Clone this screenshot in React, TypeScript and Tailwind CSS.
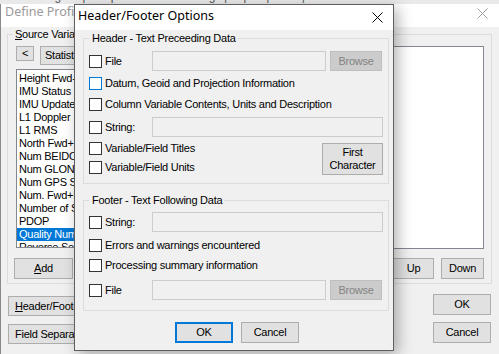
import React from "react";

function Box({ blue }: { blue?: boolean }) {
  return (
    <span
      className={
        blue
          ? "block h-[13px] w-[13px] shrink-0 border border-[#0078d7] bg-white"
          : "block h-[13px] w-[13px] shrink-0 border border-[#333333] bg-white"
      }
    />
  );
}

function CheckRow({ label, blue, cls }: { label: string; blue?: boolean; cls: string }) {
  return (
    <div className={"flex h-[13px] items-center gap-[3px] " + cls}>
      <Box blue={blue} />
      <span className="whitespace-nowrap">{label}</span>
    </div>
  );
}

function FieldRow({ label, wide, browse, cls }: { label: string; wide?: boolean; browse?: boolean; cls: string }) {
  return (
    <div className={"flex h-[20px] items-center " + cls}>
      <div className="flex w-[63px] items-center gap-[3px]">
        <Box />
        <span className="whitespace-nowrap">{label}</span>
      </div>
      <div
        className={
          wide
            ? "h-[20px] w-[231px] border border-[#cccccc] bg-[#f0f0f0]"
            : "h-[20px] w-[174px] border border-[#cccccc] bg-[#f0f0f0]"
        }
      />
      {browse && (
        <button className="ml-[4px] h-[20px] w-[52px] border border-[#bfbfbf] bg-[#cccccc] text-[#838383]">
          Browse
        </button>
      )}
    </div>
  );
}

const items = [
  "Height Fwd-Rev Sep",
  "IMU Status",
  "IMU Update Rate",
  "L1 Doppler",
  "L1 RMS",
  "North Fwd+Rev Sep",
  "Num BEIDOU Sats",
  "Num GLONASS Sats",
  "Num GPS Sats",
  "Num. Fwd+Rev Sats",
  "Number of Sats",
  "PDOP",
  "Quality Number",
  "Reverse Sep",
];

export default function App() {
  return (
    <div className="relative h-[354px] w-[499px] overflow-hidden bg-[#f0f0f0] font-['Liberation_Sans',Arial,sans-serif] text-[11px] leading-[13px] tracking-[-0.25px] text-black">
      {/* strip of window behind */}
      <div className="h-[4px] overflow-hidden bg-[#e9e9e9]">
        <div className="-mt-[10px] whitespace-nowrap pl-[4px] text-[12px] text-[#555555]">
          Processing Output Options Profile Settings | Export | Tools | Window
        </div>
      </div>

      {/* background window */}
      <div className="flex h-[350px] flex-col border-l border-[#8a8a8a] bg-[#f0f0f0]">
        <div className="flex h-[23px] items-start justify-between bg-white pl-[4px] pr-[11px]">
          <span className="font-['Noto_Sans',sans-serif] text-[12.5px] leading-[16px] tracking-normal text-[#9a9a9a]">
            Define Profile Format
          </span>
          <svg className="mt-[4px]" width="11" height="11" viewBox="0 0 11 11">
            <path d="M0.5 0.5 L10.5 10.5 M10.5 0.5 L0.5 10.5" stroke="#a0a0a0" strokeWidth="1" />
          </svg>
        </div>

        <fieldset className="ml-[6px] mt-[1px] w-[485px] border border-[#dcdcdc] pb-[4px] pl-[5px] pr-[7px] pt-[5px]">
          <legend className="pl-[2px] pr-[2px] leading-[13px]">
            <span className="underline">S</span>ource Variables
          </legend>
          <div className="flex justify-between">
            <div className="flex flex-col pl-[3px]">
              <div className="flex items-start gap-[6px]">
                <button className="h-[15px] w-[18px] border border-[#adadad] bg-[#e1e1e1] leading-[13px]">&lt;</button>
                <button className="h-[19px] w-[80px] border border-[#adadad] bg-[#e1e1e1] pl-[4px] text-left">
                  Statistics
                </button>
              </div>
              <div className="mt-[4px] h-[179px] w-[120px] overflow-hidden border border-[#828790] bg-white pt-[2px]">
                {items.map((it) => (
                  <div
                    key={it}
                    className={
                      it === "Quality Number"
                        ? "h-[13px] whitespace-nowrap bg-[#0078d7] pl-[2px] text-white"
                        : "h-[13px] whitespace-nowrap pl-[2px]"
                    }
                  >
                    {it}
                  </div>
                ))}
              </div>
              <button className="-ml-[2px] mt-[10px] h-[21px] w-[59px] border border-[#adadad] bg-[#e1e1e1]">
                <span className="underline">A</span>dd
              </button>
            </div>
            <div className="flex flex-col items-end">
              <div className="h-[203px] w-[190px] border border-[#828790] bg-white" />
              <div className="mt-[9px] flex gap-[7px]">
                <button className="h-[21px] w-[41px] border border-[#adadad] bg-[#e1e1e1]">Up</button>
                <button className="h-[21px] w-[43px] border border-[#adadad] bg-[#e1e1e1]">Down</button>
              </div>
            </div>
          </div>
        </fieldset>

        <div className="flex justify-between pl-[7px] pr-[8px]">
          <div className="mt-[12px] flex flex-col gap-[8px]">
            <button className="h-[20px] w-[110px] border border-[#adadad] bg-[#e1e1e1] pl-[6px] text-left">
              <span className="underline">H</span>eader/Footer...
            </button>
            <button className="h-[20px] w-[110px] border border-[#adadad] bg-[#e1e1e1] pl-[6px] text-left">
              Field Separators...
            </button>
          </div>
          <div className="mt-[10px] flex flex-col gap-[7px]">
            <button className="h-[21px] w-[58px] border border-[#adadad] bg-[#e1e1e1]">OK</button>
            <button className="h-[21px] w-[58px] border border-[#adadad] bg-[#e1e1e1]">Cancel</button>
          </div>
        </div>
      </div>

      {/* dialog */}
      <div className="absolute left-[74px] top-[4px] flex h-[347px] w-[320px] flex-col border border-[#5f5f5f] bg-[#f0f0f0] shadow-[4px_4px_14px_rgba(0,0,0,0.3)]">
        <div className="flex h-[25px] shrink-0 items-start justify-between bg-white pl-[3px] pr-[10px] pt-[3px]">
          <span className="font-['Noto_Sans',sans-serif] text-[12.5px] leading-[16px] tracking-normal text-black">
            Header/Footer Options
          </span>
          <svg className="mt-[4px]" width="11" height="11" viewBox="0 0 11 11">
            <path d="M0.5 0.5 L10.5 10.5 M10.5 0.5 L0.5 10.5" stroke="#000000" strokeWidth="1" />
          </svg>
        </div>

        <fieldset className="ml-[8px] mt-[2px] w-[306px] border border-[#dcdcdc] pb-[8px] pl-[5px] pr-[5px] pt-[6px]">
          <legend className="pl-[3px] pr-[2px] leading-[13px]">Header - Text Preceeding Data</legend>
          <FieldRow label="File" browse cls="" />
          <CheckRow label="Datum, Geoid and Projection Information" blue cls="mt-[6px]" />
          <CheckRow label="Column Variable Contents, Units and Description" cls="mt-[8px]" />
          <FieldRow label="String:" wide cls="mt-[6px]" />
          <div className="mt-[5px] flex items-start justify-between">
            <div className="flex flex-col">
              <CheckRow label="Variable/Field Titles" cls="" />
              <CheckRow label="Variable/Field Units" cls="mt-[6px]" />
            </div>
            <button className="mt-[1px] h-[32px] w-[61px] border border-[#adadad] bg-[#e1e1e1] leading-[13px]">
              First
              <br />
              Character
            </button>
          </div>
        </fieldset>

        <fieldset className="ml-[8px] mt-[10px] w-[306px] border border-[#dcdcdc] pb-[10px] pl-[5px] pr-[5px] pt-[5px]">
          <legend className="pl-[3px] pr-[2px] leading-[13px]">Footer - Text Following Data</legend>
          <FieldRow label="String:" wide cls="" />
          <CheckRow label="Errors and warnings encountered" cls="mt-[7px]" />
          <CheckRow label="Processing summary information" cls="mt-[7px]" />
          <FieldRow label="File" browse cls="mt-[8px]" />
        </fieldset>

        <div className="mt-[11px] flex gap-[8px] pl-[100px]">
          <button className="h-[21px] w-[58px] border-2 border-[#0078d7] bg-[#e1e1e1]">OK</button>
          <button className="h-[21px] w-[58px] border border-[#adadad] bg-[#e1e1e1]">Cancel</button>
        </div>
      </div>
    </div>
  );
}
